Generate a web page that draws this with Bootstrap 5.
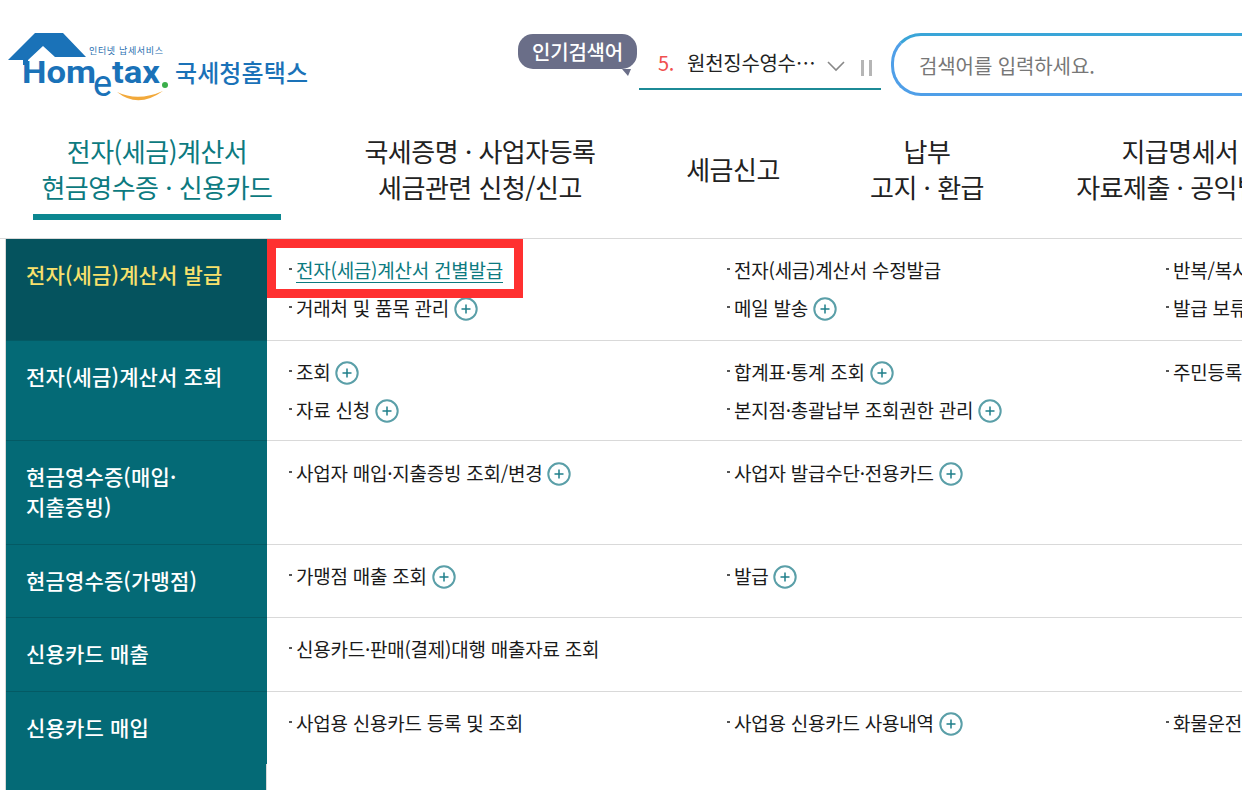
<!DOCTYPE html>
<html lang="ko">

<head>
    <meta charset="UTF-8" />
    <meta name="viewport" content="width=device-width, initial-scale=1.0" />
    <title>국세청 홈택스</title>
    <link href="https://cdn.jsdelivr.net/npm/bootstrap@5.3.0/dist/css/bootstrap.min.css" rel="stylesheet">
    <style>
        html, body { height: 790px; overflow: hidden; }
        body { font-family: "Noto Sans CJK KR", "Noto Sans", sans-serif; color: #222; background: #fff; }

        .top-bar { height: 122px; }
        .logo-box { width: 518px; padding: 32px 0 0 8px; }
        .logo-svg { display: block; }

        .rank-bubble { width: 120px; margin-top: 34px; margin-left: 0; }
        .bubble-body { display: flex; align-items: center; justify-content: center; width: 119px; height: 35px; background: #6a6e88; color: #fff; font-size: 20px; font-weight: 500; border-radius: 15px; letter-spacing: -.2px; position: relative; }
        .bubble-body::after { content: ""; position: absolute; right: 6px; bottom: -7px; border-left: 6px solid transparent; border-right: 3px solid transparent; border-top: 7px solid #6a6e88; }

        .rank-box { width: 242px; height: 56px; margin-top: 34px; margin-left: 1px; border-bottom: 2px solid #1c8a96; font-size: 20px; letter-spacing: -.3px; padding-left: 19px; padding-top: 14px; white-space: nowrap; }
        .rank-no { color: #f0504f; margin-right: 13px; }
        .rank-arrow { margin: 13px 0 0 12px; flex: none; }
        .rank-pause { margin: 12px 0 0 16px; flex: none; }

        .search-wrap { width: 500px; height: 63px; margin-top: 33px; margin-left: 10px; border: 3px solid #4f9fe8; border-right: 0; border-radius: 30px 0 0 30px; padding: 0 0 0 25px; font-size: 20px; line-height: 59px; color: #777; letter-spacing: -.1px; border-top-color: #3aa5d8; }

        .gnb { height: 117px; border-bottom: 1px solid #d9d9d9; }
        .gnb-item { text-align: center; font-size: 26px; line-height: 36px; letter-spacing: -.5px; color: #222; white-space: nowrap; display: flex; align-items: center; justify-content: center; height: 74px; flex: none; margin-top: 10px; }
        .gnb-one { width: 248px; margin-left: 33px; color: #0c7a80; }
        .gnb-two { width: 300px; margin-left: 49px; }
        .gnb-three { width: 140px; margin-left: 33px; }
        .gnb-four { width: 160px; margin-left: 44px; }
        .gnb-five { width: 210px; margin-left: 68px; }
        .gnb-bar { position: absolute; left: 33px; top: 92px; width: 248px; height: 6px; background: #0c8790; }

        .menu-table { margin-left: 5px; width: 1400px; border-left: 1px solid #d9d9d9; }
        .menu-row { display: flex; border-bottom: 1px solid #d9d9d9; }
        .menu-head { width: 261px; flex: none; background: #046a76; color: #fff; font-size: 21px; font-weight: 500; line-height: 30px; padding: 20px 20px 0; letter-spacing: .15px; border-bottom: 1px solid #045a64; margin-bottom: -1px; }
        .menu-head.is-on { background: #05535e; color: #f8e16c; }
        .menu-cols { display: grid; grid-template-columns: 438px 439px 439px; padding: 12px 0 0 21px; align-content: start; row-gap: 0; }
        .menu-link { font-size: 19px; line-height: 38px; height: 38px; letter-spacing: -.25px; color: #1a1a1a; white-space: nowrap; padding-left: 8px; position: relative; display: flex; align-items: center; }
        .menu-link::before { content: ""; position: absolute; left: 1px; top: 17px; width: 3px; height: 2px; background: #555; }
        .menu-link a { color: #0c7a80; text-decoration: none; border-bottom: 1px solid #0c7a80; line-height: 24px; }
        .plus-btn { display: inline-block; width: 24px; height: 24px; margin: 2px 0 0 5px; flex: none; }

        .row-a { height: 102px; }
        .row-b { height: 100px; }
        .row-c { height: 104px; }
        .row-c .menu-cols { padding-top: 13px; }
        .row-d { height: 73px; }
        .row-e { height: 74px; }
        .row-f { height: 72px; border-bottom: 0; }
        .row-f .menu-head { border-bottom: 0; margin-bottom: 0; }
        .row-tail { height: 27px; width: 261px; background: #046a76; border-right: 1px solid #d9d9d9; }

        .red-mark { position: absolute; left: 267px; top: 239px; width: 256px; height: 59px; border: 9px solid #ff3030; }
    </style>
</head>

<body class="position-relative">
    <svg width="0" height="0" class="position-absolute">
        <symbol id="plus" viewBox="0 0 24 24">
            <circle cx="12" cy="12" r="10.7" fill="#fff" stroke="#5a9fa8" stroke-width="2" />
            <path d="M7.5 12h9M12 7.5v9" stroke="#1f7f8a" stroke-width="1.5" fill="none" />
        </symbol>
    </svg>

    <!-- Top bar -->
    <div class="top-bar d-flex">
        <div class="logo-box flex-shrink-0">
            <svg class="logo-svg" width="305" height="72" viewBox="0 0 305 72">
                <path d="M27 1H55L78 25H47L35 14L20 28V33H15V28H0Z" fill="#1a72b8" />
                <text x="81" y="22" font-size="9" fill="#2a6fb0" font-family="Noto Sans CJK KR" textLength="74">인터넷 납세서비스</text>
                <text x="14" y="51" font-size="32" font-weight="700" fill="#1a72b8" font-family="Roboto" textLength="74" lengthAdjust="spacingAndGlyphs">Hom</text>
                <text x="85" y="64" font-size="36" fill="#1a72b8" font-family="Roboto">e</text>
                <text x="104" y="51" font-size="31" font-weight="700" fill="#1a72b8" font-family="Roboto" textLength="48" lengthAdjust="spacingAndGlyphs">tax</text>
                <circle cx="157" cy="53" r="3" fill="#3bae4a" />
                <path d="M109 60 Q130 77 155 59 Q130 70 109 60Z" fill="#f2a93b" />
                <text x="167" y="50" font-size="24" font-weight="500" fill="#1a72b8" font-family="Noto Sans CJK KR" textLength="133">국세청홈택스</text>
            </svg>
        </div>
        <div class="rank-bubble flex-shrink-0"><span class="bubble-body">인기검색어</span></div>
        <div class="rank-box flex-shrink-0 d-flex">
            <span class="rank-no">5.</span><span>원천징수영수…</span>
            <svg class="rank-arrow" width="18" height="11" viewBox="0 0 18 11"><path d="M1 1l8 8 8-8" fill="none" stroke="#888" stroke-width="1.6" /></svg>
            <svg class="rank-pause" width="11" height="16" viewBox="0 0 11 16"><path d="M1.5 0v16M9.5 0v16" stroke="#b5b5b5" stroke-width="3" /></svg>
        </div>
        <div class="search-wrap flex-shrink-0">검색어를 입력하세요.</div>
    </div>

    <!-- Main tabs -->
    <div class="gnb d-flex position-relative">
        <div class="gnb-item gnb-one">전자(세금)계산서<br>현금영수증 · 신용카드</div>
        <div class="gnb-item gnb-two">국세증명 · 사업자등록<br>세금관련 신청/신고</div>
        <div class="gnb-item gnb-three">세금신고</div>
        <div class="gnb-item gnb-four">납부<br>고지 · 환급</div>
        <div class="gnb-item gnb-five">지급명세서<br>자료제출 · 공익법인</div>
        <div class="gnb-bar"></div>
    </div>

    <!-- Menu -->
    <div class="menu-table">
        <div class="menu-row row-a">
            <div class="menu-head is-on">전자(세금)계산서 발급</div>
            <div class="menu-cols">
                <div class="menu-link"><a href="#">전자(세금)계산서 건별발급</a></div>
                <div class="menu-link">전자(세금)계산서 수정발급</div>
                <div class="menu-link">반복/복사발급</div>
                <div class="menu-link">거래처 및 품목 관리<svg class="plus-btn"><use href="#plus" /></svg></div>
                <div class="menu-link">메일 발송<svg class="plus-btn"><use href="#plus" /></svg></div>
                <div class="menu-link">발급 보류</div>
            </div>
        </div>
        <div class="menu-row row-b">
            <div class="menu-head">전자(세금)계산서 조회</div>
            <div class="menu-cols">
                <div class="menu-link">조회<svg class="plus-btn"><use href="#plus" /></svg></div>
                <div class="menu-link">합계표·통계 조회<svg class="plus-btn"><use href="#plus" /></svg></div>
                <div class="menu-link">주민등록번호</div>
                <div class="menu-link">자료 신청<svg class="plus-btn"><use href="#plus" /></svg></div>
                <div class="menu-link">본지점·총괄납부 조회권한 관리<svg class="plus-btn"><use href="#plus" /></svg></div>
            </div>
        </div>
        <div class="menu-row row-c">
            <div class="menu-head">현금영수증(매입·<br>지출증빙)</div>
            <div class="menu-cols">
                <div class="menu-link">사업자 매입·지출증빙 조회/변경<svg class="plus-btn"><use href="#plus" /></svg></div>
                <div class="menu-link">사업자 발급수단·전용카드<svg class="plus-btn"><use href="#plus" /></svg></div>
            </div>
        </div>
        <div class="menu-row row-d">
            <div class="menu-head">현금영수증(가맹점)</div>
            <div class="menu-cols">
                <div class="menu-link">가맹점 매출 조회<svg class="plus-btn"><use href="#plus" /></svg></div>
                <div class="menu-link">발급<svg class="plus-btn"><use href="#plus" /></svg></div>
            </div>
        </div>
        <div class="menu-row row-e">
            <div class="menu-head">신용카드 매출</div>
            <div class="menu-cols">
                <div class="menu-link">신용카드·판매(결제)대행 매출자료 조회</div>
            </div>
        </div>
        <div class="menu-row row-f">
            <div class="menu-head">신용카드 매입</div>
            <div class="menu-cols">
                <div class="menu-link">사업용 신용카드 등록 및 조회</div>
                <div class="menu-link">사업용 신용카드 사용내역<svg class="plus-btn"><use href="#plus" /></svg></div>
                <div class="menu-link">화물운전자</div>
            </div>
        </div>
        <div class="row-tail"></div>
    </div>

    <!-- highlight drawn over the first menu link -->
    <div class="red-mark"></div>

    <script src="https://cdn.jsdelivr.net/npm/bootstrap@5.3.0/dist/js/bootstrap.bundle.min.js"></script>
</body>

</html>
